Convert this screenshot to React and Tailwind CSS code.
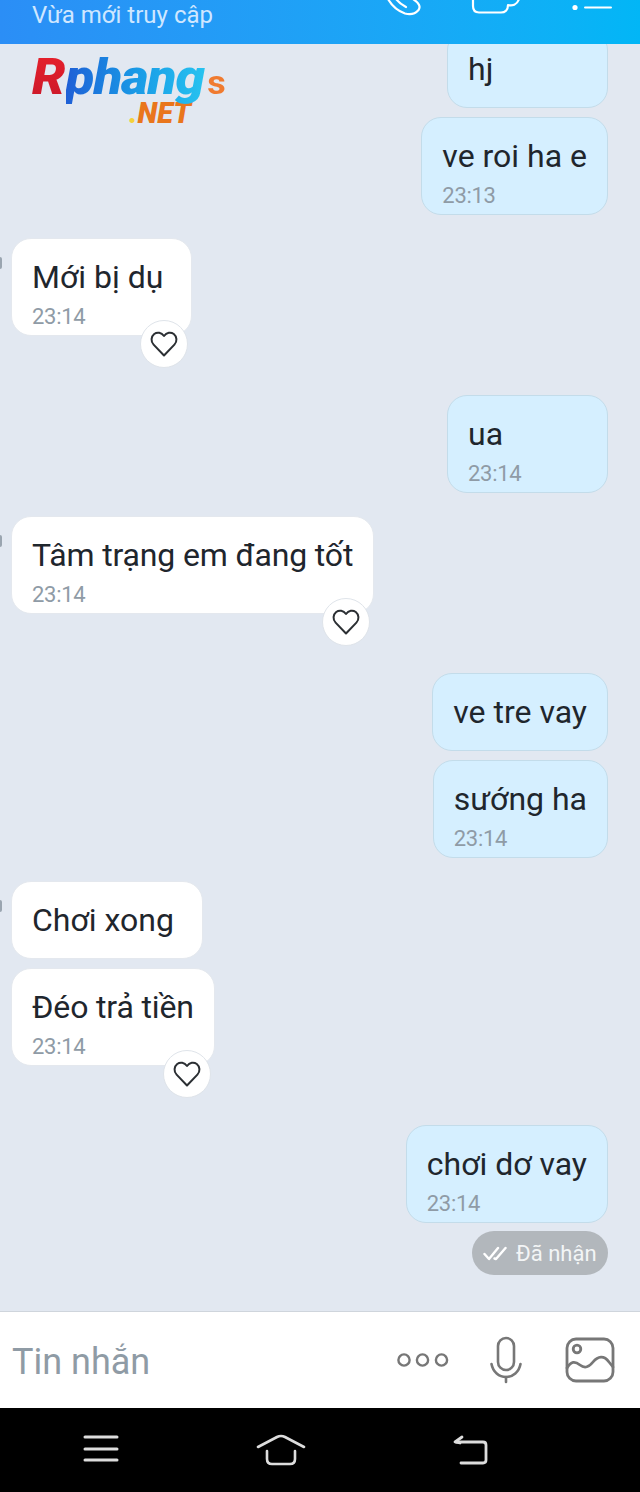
import React from 'react';

function Heart() {
    return (
        <div className="absolute right-[3px] -bottom-[33px] w-[48px] h-[48px] rounded-full bg-white border border-[#dfe4ea] flex items-center justify-center">
            <svg width="28" height="26" viewBox="0 0 28 26" fill="none" stroke="#2b2f33" strokeWidth="2" strokeLinejoin="round">
                <path d="M14 24.5 L3.6 13.6 C0.6 10.4 1 5.6 4.2 3 C7.2 0.8 11.4 1.4 14 5 C16.6 1.4 20.8 0.8 23.8 3 C27 5.6 27.4 10.4 24.4 13.6 Z" />
            </svg>
        </div>
    );
}

// one chat bubble, mine = blue on the right
function Bubble({ text, time, mine, heart, dot, mt, wide, tight }) {
    return (
        <div className={`relative ${mt} rounded-[20px] pl-[20px] ${wide ? 'pr-[28px]' : 'pr-[20px]'} pt-[20px] ${time ? 'pb-[5px]' : 'pb-[20px]'} ${mine ? 'self-end bg-[#d5efff] border border-[#c3dcea]' : 'self-start bg-white border border-[#e4e8ee]'}`}>
            {dot && <div className="absolute -left-[12px] top-[18px] w-[2px] h-[12px] rounded-r-full bg-[#9aa5b0]" />}
            <div className={`text-[32px] leading-[36px] whitespace-nowrap text-[#1f262d] ${tight ? 'tracking-[-0.15px]' : ''}`}>{text}</div>
            {time && <div className="mt-[9px] text-[22px] leading-[26px] tracking-[-0.3px] text-[#8f9ba6]">{time}</div>}
            {heart && <Heart />}
        </div>
    );
}

function Logo() {
    return (
        <div className="absolute left-[32px] top-[6px] w-[194px]">
            <div className="flex items-baseline h-[52px] origin-left scale-x-[1.06] italic font-black text-[50px] leading-[54px] tracking-[-1px]">
                <span className="bg-gradient-to-b from-[#e8202b] to-[#c9182a] bg-clip-text text-transparent pr-[1px]">R</span>
                <span className="bg-gradient-to-r from-[#1f5fd6] via-[#1a9ae6] to-[#28c4f0] bg-clip-text text-transparent pr-[3px]">phang</span>
                <span className="not-italic font-bold text-[#f07b30] text-[34px]">s</span>
            </div>
            <div className="ml-[97px] -mt-[3px] italic font-black text-[29px] leading-[28px] text-[#e9761c]">
                <span className="text-[#f4d23a]">.</span>NET
            </div>
        </div>
    );
}

export default function App() {
    return (
        <div className="w-[640px] h-[1492px] flex flex-col overflow-hidden bg-[#e2e8f1]" style={{ fontFamily: 'Roboto, "Noto Sans", sans-serif' }}>
            <div className="h-[44px] shrink-0 flex justify-between overflow-hidden bg-gradient-to-r from-[#2b8ef6] to-[#02b6f6] pl-[32px]">
                <div className="text-[24px] leading-[30px] text-[#cfe7ff]">Vừa mới truy cập</div>
                <div className="flex items-start">
                    <svg width="36" height="16" viewBox="0 0 36 16" fill="none" stroke="white" strokeWidth="2.2" strokeLinecap="round" strokeLinejoin="round">
                        <path d="M2 -1 C6 6 12 11 19 13.5 C24 15 29 14 32.5 10 C35 6.5 33 3 27 -1" />
                        <path d="M10 -1 Q14 4 20 7" />
                    </svg>
                    <svg className="ml-[49px]" width="52" height="16" viewBox="0 0 52 16" fill="none" stroke="white" strokeWidth="2.2" strokeLinecap="round" strokeLinejoin="round">
                        <path d="M2 -1 V6 C2 10 4 12.5 8 12.5 H30 C34 12.5 37 10 37 5 C41 6 46 5 48 -1" />
                    </svg>
                    <svg className="ml-[48px] mr-[27px]" width="42" height="14" viewBox="0 0 42 14" fill="none">
                        <circle cx="4" cy="7.5" r="2.6" fill="white" />
                        <rect x="13" y="6.4" width="28" height="2.2" rx="1.1" fill="white" />
                    </svg>
                </div>
            </div>

            <div className="relative flex-1 min-h-0 overflow-hidden flex flex-col pr-[32px] pl-[11px]">
                <Logo />
                <Bubble mine mt="-mt-[14px]" text={<span className="inline-block w-[119px]">hj</span>} />
                <Bubble mine mt="mt-[9px]" text="ve roi ha e" time="23:13" />
                <Bubble dot heart wide mt="mt-[23px]" text="Mới bị dụ" time="23:14" />
                <Bubble mine mt="mt-[59px]" text={<span className="inline-block w-[119px]">ua</span>} time="23:14" />
                <Bubble dot heart tight mt="mt-[23px]" text="Tâm trạng em đang tốt" time="23:14" />
                <Bubble mine mt="mt-[59px]" text="ve tre vay" />
                <Bubble mine mt="mt-[9px]" text="sướng ha" time="23:14" />
                <Bubble dot wide mt="mt-[23px]" text="Chơi xong" />
                <Bubble heart tight mt="mt-[9px]" text="Đéo trả tiền" time="23:14" />
                <Bubble mine mt="mt-[59px]" text="chơi dơ vay" time="23:14" />
                <div className="self-end mt-[8px] h-[44px] w-[136px] rounded-full bg-[#b2b7bc] flex items-center pl-[11px] gap-[9px]">
                    <svg width="24" height="16" viewBox="0 0 24 16" fill="none" stroke="white" strokeWidth="2.4" strokeLinecap="round" strokeLinejoin="round">
                        <path d="M1.5 9 L6 14 L15 3" />
                        <path d="M11.5 13.5 L13 14 L22.5 3" />
                    </svg>
                    <span className="text-[22px] text-[#f3f5f6]">Đã nhận</span>
                </div>
            </div>

            <div className="h-[97px] shrink-0 bg-white border-t border-[#cfd5dc] flex items-center pl-[12px]">
                <div className="flex-1 text-[36px] leading-[42px] pt-[3px] text-[#8f9ba5]">Tin nhắn</div>
                <svg width="54" height="18" viewBox="0 0 54 18" fill="none" stroke="#777" strokeWidth="2.4">
                    <circle cx="9" cy="9" r="5.6" />
                    <circle cx="27.5" cy="9" r="5.6" />
                    <circle cx="46.5" cy="9" r="5.6" />
                </svg>
                <svg className="ml-[41px]" width="32" height="48" viewBox="0 0 32 48" fill="none" stroke="#777" strokeWidth="2.6" strokeLinecap="round">
                    <rect x="8" y="2" width="16" height="32" rx="8" />
                    <path d="M1.5 28 C3 36 9 41 16 41 C23 41 29 36 30.5 28" />
                    <path d="M16 41 V46" />
                </svg>
                <svg className="ml-[43px] mr-[25px]" width="50" height="46" viewBox="0 0 50 46" fill="none" stroke="#777" strokeWidth="2.8" strokeLinecap="round" strokeLinejoin="round">
                    <rect x="2" y="2" width="46" height="42" rx="9" />
                    <circle cx="12" cy="12" r="3.8" />
                    <path d="M2 31 C6 24 10 24 15 28 C20 32 24 30 28 25 C33 19 39 18 44 25 L48 30" />
                </svg>
            </div>

            <div className="h-[84px] shrink-0 bg-black flex items-start pt-[26px]">
                <svg className="ml-[83px]" width="36" height="30" viewBox="0 0 36 30" stroke="#ddd" strokeWidth="3" strokeLinecap="round" fill="none">
                    <path d="M2 3 H34 M2 15 H34 M2 26 H34" />
                </svg>
                <svg className="ml-[137px]" width="50" height="34" viewBox="0 0 50 34" stroke="#ddd" strokeWidth="2.6" strokeLinecap="round" strokeLinejoin="round" fill="none">
                    <path d="M2 13 L21 3 Q25 1 29 3 L48 13" />
                    <path d="M11 17 V25 Q11 30 16 30 H34 Q39 30 39 25 V17" />
                </svg>
                <svg className="ml-[146px]" width="38" height="32" viewBox="0 0 38 32" stroke="#ddd" strokeWidth="2.8" strokeLinecap="round" strokeLinejoin="round" fill="none">
                    <path d="M4 8 H31 Q34 8 34 11 V26 Q34 29 31 29 H9" />
                    <path d="M10 3 L3 8 L8 9" />
                </svg>
            </div>
        </div>
    );
}
